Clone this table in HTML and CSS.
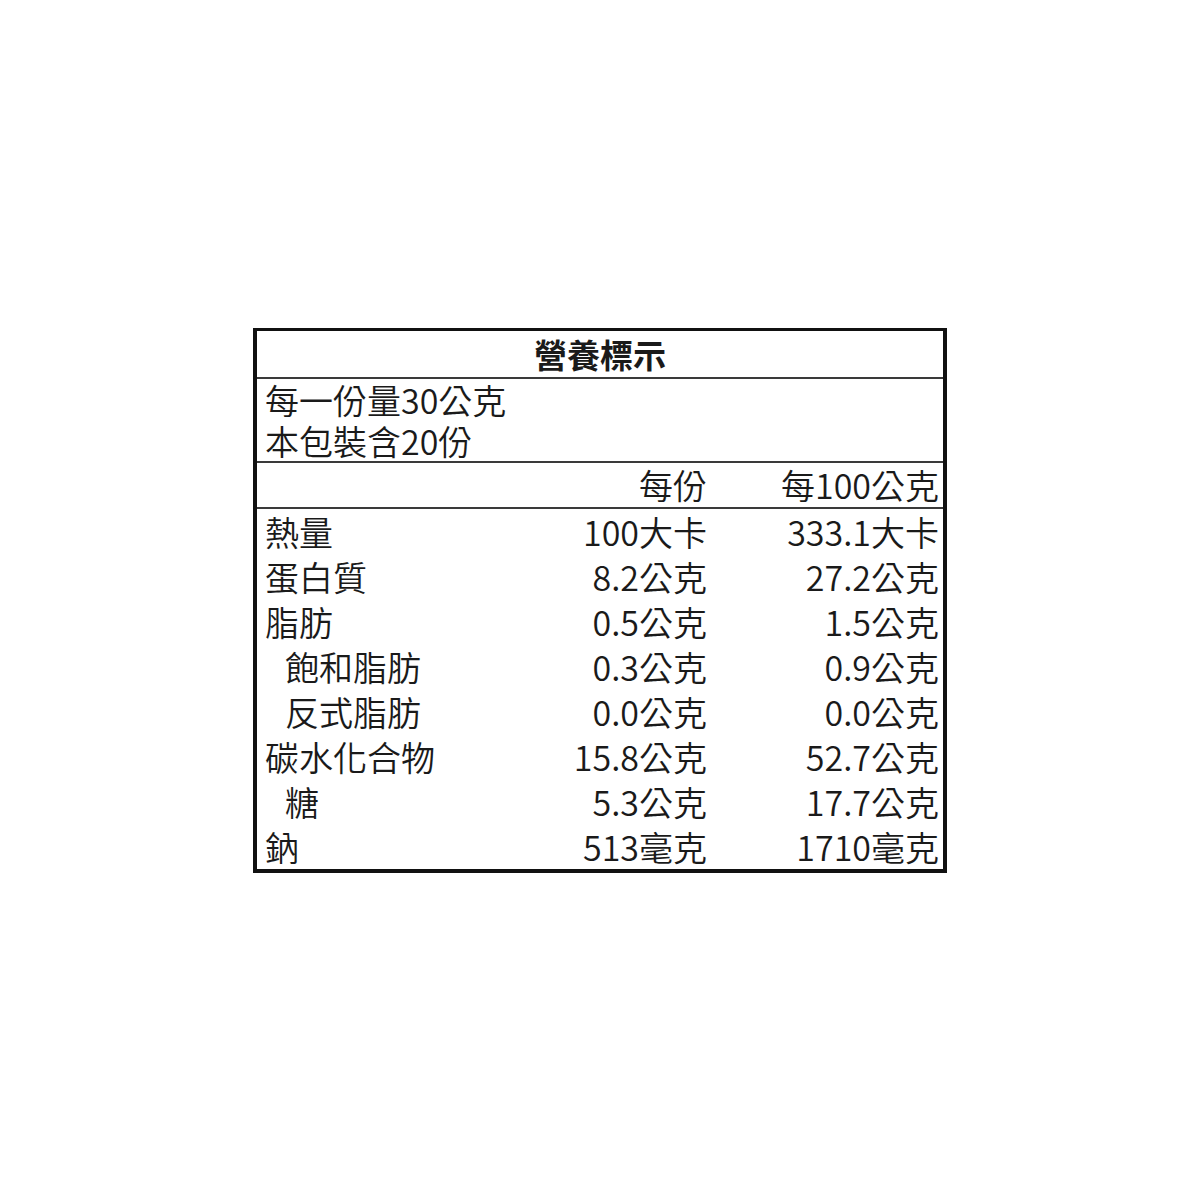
FILE: index.html
```html
<!DOCTYPE html>
<html lang="zh-Hant">
<head>
<meta charset="utf-8">
<link rel="stylesheet" href="styles.css">
</head>
<body>
<div class="panel">
  <div class="title">營養標示</div>
  <div class="serving">
    <div class="sline">每一份量30公克</div>
    <div class="sline">本包裝含20份</div>
  </div>
  <div class="row head">
    <div class="name"></div>
    <div class="v1">每份</div>
    <div class="v2">每100公克</div>
  </div>
  <div class="data">
    <div class="row"><div class="name">熱量</div><div class="v1">100大卡</div><div class="v2">333.1大卡</div></div>
    <div class="row"><div class="name">蛋白質</div><div class="v1">8.2公克</div><div class="v2">27.2公克</div></div>
    <div class="row"><div class="name">脂肪</div><div class="v1">0.5公克</div><div class="v2">1.5公克</div></div>
    <div class="row"><div class="name sub">飽和脂肪</div><div class="v1">0.3公克</div><div class="v2">0.9公克</div></div>
    <div class="row"><div class="name sub">反式脂肪</div><div class="v1">0.0公克</div><div class="v2">0.0公克</div></div>
    <div class="row"><div class="name">碳水化合物</div><div class="v1">15.8公克</div><div class="v2">52.7公克</div></div>
    <div class="row"><div class="name sub">糖</div><div class="v1">5.3公克</div><div class="v2">17.7公克</div></div>
    <div class="row"><div class="name">鈉</div><div class="v1">513毫克</div><div class="v2">1710毫克</div></div>
  </div>
</div>
</body>
</html>
```
FILE: styles.css
```css
html, body {
  margin: 0;
  padding: 0;
  background: #ffffff;
}
body {
  width: 1200px;
  height: 1200px;
  display: flex;
  align-items: center;
  justify-content: center;
  font-family: "Noto Sans CJK TC", "Noto Sans", sans-serif;
  color: #1a1a1a;
  font-size: 34px;
  font-weight: 350;
}
.panel {
  width: 694px;
  box-sizing: border-box;
  border: 4px solid #111;
  border-top-width: 3px;
  display: flex;
  flex-direction: column;
}
.title {
  height: 46px;
  line-height: 46px;
  text-align: center;
  font-weight: bold;
  font-size: 33px;
  border-bottom: 2px solid #3a3a3a;
}
.serving {
  border-bottom: 2px solid #3a3a3a;
  padding-left: 8px;
}
.sline {
  height: 41px;
  line-height: 41px;
}
.row {
  display: flex;
  height: 45px;
  line-height: 45px;
  white-space: nowrap;
}
.head {
  height: 44px;
  line-height: 44px;
  border-bottom: 2px solid #3a3a3a;
}
.name {
  flex: 1;
  padding-left: 8px;
}
.name.sub {
  padding-left: 28px;
}
.v1 {
  width: 240px;
  text-align: right;
}
.v2 {
  width: 232px;
  padding-right: 4px;
  text-align: right;
}
```
